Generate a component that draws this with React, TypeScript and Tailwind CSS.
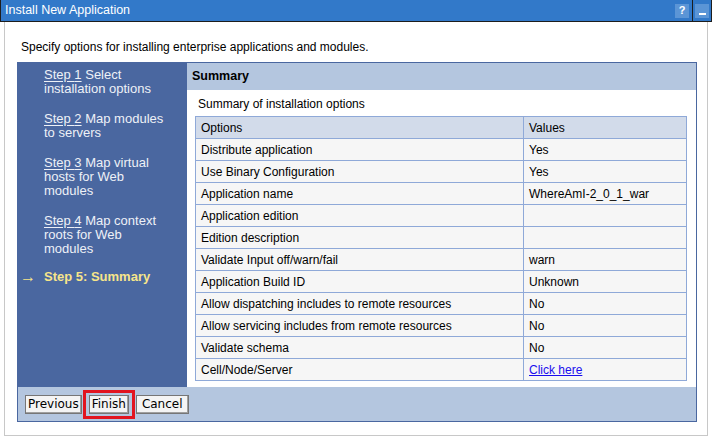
const rows: [string, string][] = [
  ["Distribute application", "Yes"],
  ["Use Binary Configuration", "Yes"],
  ["Application name", "WhereAmI-2_0_1_war"],
  ["Application edition", ""],
  ["Edition description", ""],
  ["Validate Input off/warn/fail", "warn"],
  ["Application Build ID", "Unknown"],
  ["Allow dispatching includes to remote resources", "No"],
  ["Allow servicing includes from remote resources", "No"],
  ["Validate schema", "No"],
  ["Cell/Node/Server", "link"],
];

function StepLink({ n, children }: { n: number; children: React.ReactNode }) {
  return (
    <div className="leading-[14px]">
      <span className="inline-block leading-[14px] underline underline-offset-2">Step {n}</span> {children}
    </div>
  );
}

function WinButton({ label, pad, boxed }: { label: string; pad: string; boxed?: boolean }) {
  const btn = (
    <button
      className={`h-[19px] border border-[#767676] bg-[#f4f4f4] ${pad} text-[12px] leading-[17px] text-black font-['DejaVu_Sans',sans-serif] shadow-[inset_-1px_-1px_0_#a0a0a0]`}
    >
      {label}
    </button>
  );
  if (!boxed) return btn;
  return <div className="border-[3px] border-[#e2141f] px-[3px] py-[2px] flex">{btn}</div>;
}

export default function App() {
  return (
    <div className="w-[712px] h-[439px] bg-white font-['Liberation_Sans',Arial,sans-serif] text-[12px] text-black overflow-hidden">
      <div className="h-[22px] bg-[#3279c9] border border-[#1d1d1d] border-t-0 flex items-center">
        <div className="flex-1 pl-[4px] text-white text-[12.5px] leading-none">Install New Application</div>
        <div className="flex items-stretch h-full">
          <div className="w-[14px] h-[14px] my-auto mr-[3px] bg-[#5b95d6] text-white text-[11px] font-bold flex items-center justify-center leading-none">?</div>
          <div className="w-[1px] bg-[#1d1d1d]" />
          <div className="w-[14px] h-[14px] my-auto mx-[2px] bg-[#5b95d6] flex items-end justify-center pb-[3px]">
            <div className="w-[7px] h-[2px] bg-white" />
          </div>
        </div>
      </div>

      <div className="mx-[4px] h-[414px] border-x border-b border-[#c8c8c8] pl-[12px] pr-[10px]">
        <div className="pt-[18px] pb-[8px] pl-[4px] leading-[14px]">
          Specify options for installing enterprise applications and modules.
        </div>

        <div className="border border-[#4a67a0] flex flex-col">
          <div className="flex">
            <div className="w-[169px] bg-[#4a67a0] text-[#eef1f7] text-[13px] pt-[5px] pb-[10px]">
              <div className="pl-[26px] w-[152px] flex flex-col gap-[16px]">
                <StepLink n={1}>Select installation options</StepLink>
                <StepLink n={2}>Map modules to servers</StepLink>
                <StepLink n={3}>Map virtual hosts for Web modules</StepLink>
                <StepLink n={4}>Map context roots for Web modules</StepLink>
              </div>
              <div className="mt-[14px] flex items-center leading-[14px] font-bold text-[#f7e58a]">
                <span className="w-[26px] pl-[2px] text-[16px] font-normal">→</span>
                <span>Step 5: Summary</span>
              </div>
            </div>

            <div className="flex-1 flex flex-col">
              <div className="h-[27px] bg-[#b4c6df] pl-[5px] flex items-center font-bold text-[12.5px]">Summary</div>
              <div className="pl-[8px] pr-[9px] pt-[7px] pb-[6px]">
                <div className="pl-[3px] leading-[14px] mb-[5px]">Summary of installation options</div>
                <table className="w-full border-collapse">
                  <thead>
                    <tr className="bg-[#d2dbea] h-[22px]">
                      <th className="border border-[#8fa9d8] text-left font-normal pl-[5px] w-[328px]">Options</th>
                      <th className="border border-[#8fa9d8] text-left font-normal pl-[5px]">Values</th>
                    </tr>
                  </thead>
                  <tbody>
                    {rows.map(([k, v]) => (
                      <tr key={k} className="bg-[#f6f6f6] h-[22px]">
                        <td className="border border-[#8fa9d8] pl-[5px]">{k}</td>
                        <td className="border border-[#8fa9d8] pl-[5px]">
                          {v === "link" ? <a href="#" className="text-[#1a0dee] underline">Click here</a> : v}
                        </td>
                      </tr>
                    ))}
                  </tbody>
                </table>
              </div>
            </div>
          </div>

          <div className="h-[34px] bg-[#b4c6df] flex items-center pl-[7px] gap-[1px]">
            <WinButton label="Previous" pad="px-[2px]" />
            <WinButton label="Finish" pad="px-[2px]" boxed />
            <WinButton label="Cancel" pad="px-[5px]" />
          </div>
        </div>
      </div>
    </div>
  );
}
